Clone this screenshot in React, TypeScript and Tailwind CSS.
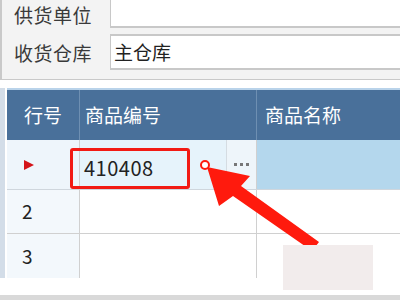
const cjk = { fontFamily: '"Noto Sans CJK SC", "Noto Sans", sans-serif' }

function Arrow() {
  return (
    <svg className="pointer-events-none absolute left-0 top-0" width="400" height="300" viewBox="0 0 400 300">
      <polygon
        points="207,167 250,176 241,186 319,242 312,251 233,196 219,206"
        fill="#ff1a0d"
      />
      <circle cx="205" cy="165" r="4" fill="#ffffff" stroke="#ff1a0d" strokeWidth="2" />
    </svg>
  )
}

export default function App() {
  return (
    <div className="relative h-[300px] w-[400px] overflow-hidden bg-white text-[#333]" style={cjk}>
      {/* form panel */}
      <div className="flex h-[80px] flex-col border-b border-l-2 border-[#c9c9c9] bg-[#f3f3f3]">
        <div className="flex h-[28px] items-center">
          <div className="w-[108px] pl-[12px] text-[19px] leading-none tracking-[0.5px] text-[#3a3a3a]">供货单位</div>
          <div className="h-[28px] flex-1 border-b-2 border-l border-[#c8c8c8] bg-white" />
        </div>
        <div className="mt-[6px] flex h-[36px] items-center">
          <div className="w-[108px] pl-[12px] text-[19px] leading-none tracking-[0.5px] text-[#3a3a3a]">收货仓库</div>
          <div className="flex h-[36px] flex-1 items-center border-y-2 border-l border-[#c8c8c8] bg-white pl-[3px] text-[19px] text-[#222]">
            主仓库
          </div>
        </div>
      </div>

      {/* grid */}
      <div className="mt-[8px] flex h-[190px] flex-col border-l-[5px] border-[#d3dde8] pl-[2px]">
        <div className="flex h-[52px] border-t-2 border-[#b9d3ea] bg-[#49709a] text-[19px] text-white">
          <div className="flex w-[73px] items-center justify-center border-r border-[#6e8fb2]">行号</div>
          <div className="flex w-[177px] items-center border-r border-[#6e8fb2] pl-[5px]">商品编号</div>
          <div className="flex flex-1 items-center pl-[8px]">商品名称</div>
        </div>

        <div className="flex h-[50px] border-b border-[#cfd6dd]">
          <div className="flex w-[73px] items-center border-r border-[#d0d0d0] bg-[#eef5fb] pl-[16px]">
            <svg width="12" height="12" viewBox="0 0 12 12">
              <polygon points="1,1 11,6 1,11" fill="#d4141a" />
            </svg>
          </div>
          <div className="flex w-[177px] border-r border-[#d0d0d0] bg-[#e6f3fb]">
            <div className="flex flex-1 items-center pl-[4px] pt-[6px] text-[20px] tracking-[0.5px] text-[#222]">410408</div>
            <div className="flex w-[30px] items-center justify-center gap-[3px] border-l border-[#d5dce2] bg-[#eef5fa]">
              <span className="h-[3px] w-[3px] bg-[#777]" />
              <span className="h-[3px] w-[3px] bg-[#777]" />
              <span className="h-[3px] w-[3px] bg-[#777]" />
            </div>
          </div>
          <div className="flex-1 bg-[#b4d7ed]" />
        </div>

        {['2', '3'].map((n) => (
          <div key={n} className="flex h-[44px] border-b border-[#d0d0d0] last:border-b-0">
            <div className="flex w-[73px] items-center border-r border-[#d0d0d0] bg-[#f3f8fc] pl-[15px] text-[19px] text-[#222]">
              {n}
            </div>
            <div className="w-[177px] border-r border-[#d0d0d0] bg-white" />
            <div className="flex-1 bg-white" />
          </div>
        ))}
      </div>

      <div className="absolute bottom-0 left-0 h-[5px] w-full bg-[#d9d9d9]" />
      {/* annotation overlay */}
      <div className="absolute left-[70px] top-[148px] h-[41px] w-[120px] rounded-[3px] border-[3px] border-[#f21a14]" />
      <Arrow />
      <div className="absolute left-[283px] top-[245px] h-[45px] w-[90px] bg-[#f2ecec]" />
    </div>
  )
}
